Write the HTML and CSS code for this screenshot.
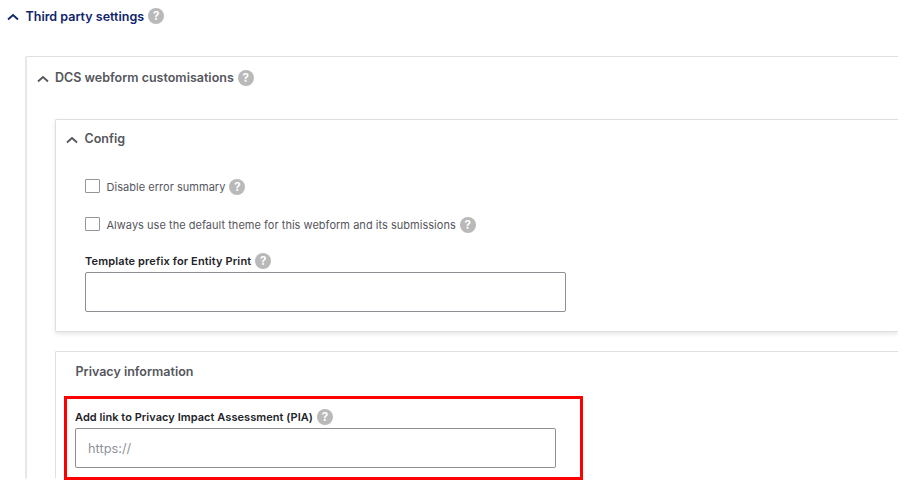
FILE: index.html
```html
<!DOCTYPE html>
<html lang="en">
<head>
    <meta charset="UTF-8">
    <meta name="viewport" content="width=device-width, initial-scale=1.0">
    <title>Third party settings</title>
    <link rel="stylesheet" href="styles.css">
</head>
<body>
    <div class="page">
        <div class="summary summary-main">
            <svg class="chevron" viewBox="0 0 12 8"><path d="M1 6.500 6 2l5 4.500"/></svg>
            <span>Third party settings</span>
            <span class="help">?</span>
        </div>

        <div class="panel panel-outer">
            <div class="summary summary-dcs">
                <svg class="chevron" viewBox="0 0 12 8"><path d="M1 6.500 6 2l5 4.500"/></svg>
                <span class="summary-text">DCS webform customisations</span>
                <span class="help">?</span>
            </div>

            <div class="panel panel-config">
                <div class="summary summary-config">
                    <svg class="chevron" viewBox="0 0 12 8"><path d="M1 6.500 6 2l5 4.500"/></svg>
                    <span class="summary-text">Config</span>
                </div>
                <div class="config-body">
                    <div class="check">
                        <input type="checkbox" id="errorSummary">
                        <label for="errorSummary">Disable error summary</label>
                        <span class="help">?</span>
                    </div>
                    <div class="check">
                        <input type="checkbox" id="defaultTheme">
                        <label for="defaultTheme">Always use the default theme for this webform and its submissions</label>
                        <span class="help">?</span>
                    </div>
                    <div class="field">
                        <div class="field-label">
                            <label for="prefix" class="label-prefix">Template prefix for Entity Print</label>
                            <span class="help">?</span>
                        </div>
                        <input type="text" id="prefix">
                    </div>
                </div>
            </div>

            <div class="panel panel-privacy">
                <div class="legend"><span>Privacy information</span></div>
                <div class="highlight">
                    <div class="field-label">
                        <label for="pia" class="label-pia">Add link to Privacy Impact Assessment (PIA)</label>
                        <span class="help">?</span>
                    </div>
                    <input type="text" id="pia" placeholder="https://">
                </div>
            </div>
        </div>
    </div>
</body>
</html>
```
FILE: styles.css
```css
* {
    box-sizing: border-box;
}
body {
    margin: 0;
    background: #fff;
    font-family: Inter, "Liberation Sans", sans-serif;
    font-size: 11px;
    color: #55565d;
}
.page {
    width: 898px;
    height: 480px;
    overflow: hidden;
}
.summary {
    display: flex;
    align-items: center;
    height: 20px;
    font-size: 12.5px;
    font-weight: 600;
    white-space: nowrap;
}
.summary-main {
    padding: 0 0 0 7px;
    height: 32px;
    color: #10256b;
}
.summary-text {
    margin-bottom: 2px;
}
.chevron {
    width: 12px;
    height: 8px;
    margin: 2px 6.5px 0 0;
    fill: none;
    stroke: currentColor;
    stroke-width: 1.8;
}
.help {
    width: 16px;
    height: 16px;
    margin-left: 4px;
    border-radius: 50%;
    background: #b9b9b9;
    color: #fff;
    font-size: 11.5px;
    font-weight: 700;
    line-height: 16px;
    text-align: center;
    letter-spacing: 0;
}
.panel {
    border: 1px solid #dedfe3;
    border-right: 0;
    border-radius: 2px 0 0 2px;
    box-shadow: 0 2px 4px rgba(0, 0, 0, 0.1);
}
.panel-outer {
    height: 423px;
    margin: 24px 0 0 25px;
    padding: 11px 0 0 29px;
    border-left: 2px solid #e6e6ec;
    border-bottom: 0;
    box-shadow: none;
}
.summary-dcs {
    margin-left: -19.5px;
}
.panel-config {
    height: 213px;
    margin: 31px 0 0 -1px;
    padding: 9px 0 0 10px;
}
.config-body {
    padding: 28px 0 0 19px;
}
.check {
    display: flex;
    align-items: center;
    height: 20px;
    margin-bottom: 18px;
    letter-spacing: 0.03px;
}
.check label {
    white-space: nowrap;
}
input[type="checkbox"] {
    appearance: none;
    width: 15px;
    height: 14px;
    margin: 0 6.5px 2px 0;
    border: 1px solid #94949a;
    border-radius: 1px;
}
.field-label {
    display: flex;
    align-items: center;
    height: 16px;
    font-weight: 600;
    color: #232429;
    white-space: nowrap;
}
.label-prefix {
    letter-spacing: 0.13px;
}
.label-pia {
    letter-spacing: 0.05px;
}
input[type="text"] {
    display: block;
    width: 481px;
    height: 40px;
    margin-top: 3px;
    padding: 0 12px;
    border: 1px solid #8e8f94;
    border-radius: 2px;
    font-family: inherit;
    font-size: 12.8px;
}
input::placeholder {
    color: #8e929c;
}
.panel-privacy {
    height: 128px;
    margin: 19px 0 0 -1px;
    padding: 9px 0 0 8px;
    border-bottom: 0;
    box-shadow: none;
}
.legend {
    height: 20px;
    margin-left: 11.5px;
    font-size: 12.5px;
    font-weight: 600;
    line-height: 21px;
}
.highlight {
    width: 519px;
    height: 84px;
    margin-top: 15px;
    padding: 10px 0 0 8px;
    border: 3px solid #f00;
}
```
